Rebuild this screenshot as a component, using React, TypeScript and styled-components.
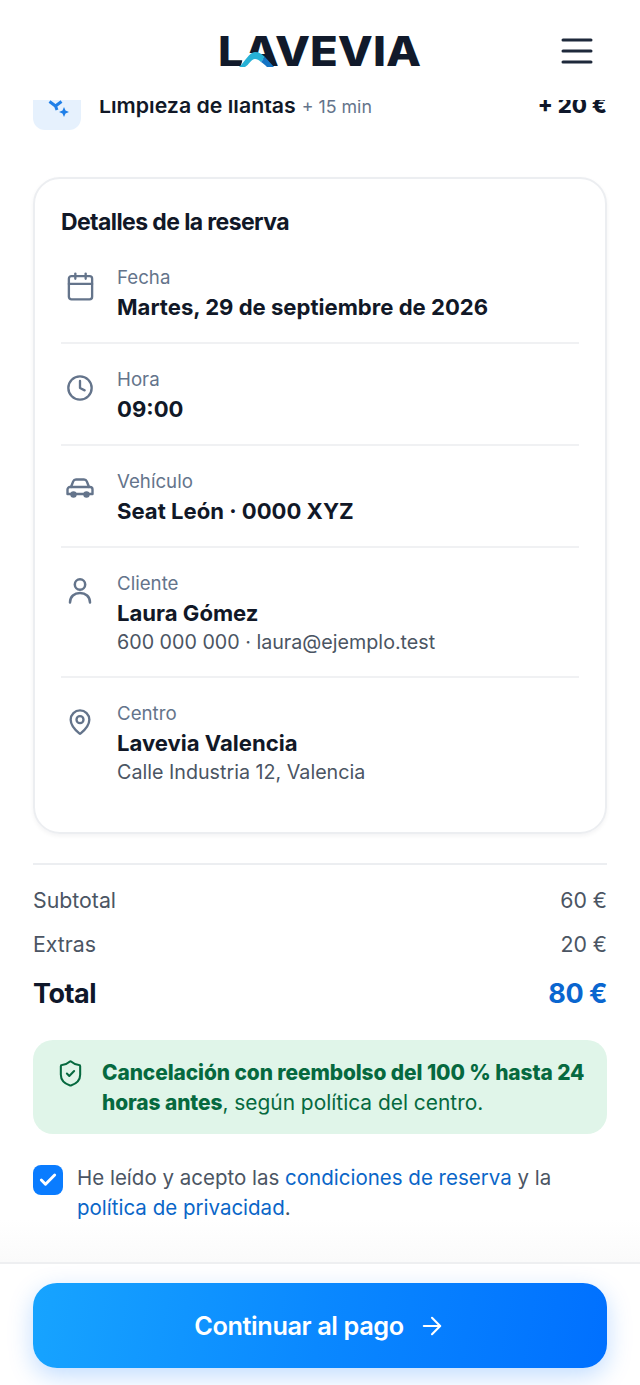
import React from "react";
import styled, { createGlobalStyle } from "styled-components";
import { Calendar, Clock, MapPin, ShieldCheck, Check, ArrowRight } from "lucide-react";

const GlobalStyle = createGlobalStyle`
  html, body { margin: 0; padding: 0; background: #fff; }
  * { box-sizing: border-box; }
  body { font-family: "Inter", "Liberation Sans", sans-serif; color: #0f172a; }
`;

const Page = styled.div`
  width: 640px;
  height: 1385px;
  display: flex;
  flex-direction: column;
  overflow: hidden;
  background: #fff;
`;

const Header = styled.header`
  height: 100px;
  flex-shrink: 0;
  display: flex;
  align-items: center;
  justify-content: center;
  position: relative;
  z-index: 2;
  background: #fff;
`;

const Logo = styled.svg`
  display: block;
`;

const MenuButton = styled.button`
  position: absolute;
  right: 47px;
  top: 38px;
  width: 32px;
  height: 26px;
  padding: 0;
  border: none;
  background: none;
`;

const Main = styled.main`
  flex: 1;
  min-height: 0;
  overflow: hidden;
  padding: 0 33px;
  background: linear-gradient(#fff 1120px, #fafafa);
`;

const ExtraRow = styled.div`
  display: flex;
  align-items: flex-start;
  gap: 18px;
  margin-top: -18px;
  height: 48px;
`;

const ExtraIcon = styled.div`
  width: 48px;
  height: 48px;
  border-radius: 12px;
  background: #e6f1fd;
  display: flex;
  align-items: center;
  justify-content: center;
  flex-shrink: 0;
`;

const ExtraName = styled.div`
  flex: 1;
  font-size: 21.3px;
  font-weight: 600;
  line-height: 30px;
  margin-top: 8px;
  color: #111827;
`;

const ExtraTime = styled.span`
  font-size: 17.8px;
  font-weight: 400;
  color: #64748b;
  margin-left: 6px;
`;

const ExtraPrice = styled.div`
  font-size: 22px;
  font-weight: 800;
  line-height: 30px;
  margin-top: 8px;
  color: #0f172a;
`;

const Card = styled.section`
  margin-top: 47px;
  height: 657px;
  border: 2px solid #eceef1;
  border-radius: 27px;
  padding: 27px 26px 0;
  box-shadow: 0 2px 4px rgba(15, 23, 42, 0.05);
`;

const CardTitle = styled.h2`
  margin: 0 0 4px;
  font-size: 23px;
  line-height: 32px;
  font-weight: 700;
  letter-spacing: -0.6px;
  color: #111827;
`;

const DetailRow = styled.div<{ $last?: boolean }>`
  display: flex;
  gap: 18px;
  padding: 23px 0 ${(p) => (p.$last ? "0" : "19px")};
  border-bottom: ${(p) => (p.$last ? "none" : "2px solid #f0f1f3")};
`;

const DetailIcon = styled.div`
  width: 38px;
  height: 42px;
  flex-shrink: 0;
  display: flex;
  align-items: center;
  justify-content: center;
  color: #64748b;
`;

const DetailBody = styled.div`
  display: flex;
  flex-direction: column;
  min-width: 0;
`;

const DetailLabel = styled.div`
  font-size: 18.7px;
  line-height: 26px;
  color: #64748b;
`;

const DetailValue = styled.div`
  font-size: 22.1px;
  line-height: 32px;
  font-weight: 700;
  color: #111827;
`;

const DetailNote = styled.div`
  font-size: 19.7px;
  line-height: 28px;
  margin: -1px 0 1px;
  color: #4b5563;
`;

const Summary = styled.div`
  margin-top: 29px;
  border-top: 2px solid #eceef1;
  padding-top: 20px;
`;

const SummaryRow = styled.div`
  display: flex;
  justify-content: space-between;
  font-size: 21.3px;
  line-height: 30px;
  height: 44px;
  color: #4b5563;
`;

const TotalRow = styled.div`
  display: flex;
  justify-content: space-between;
  align-items: center;
  height: 40px;
  font-size: 27px;
  font-weight: 700;
  letter-spacing: -0.5px;
  color: #0f172a;
`;

const TotalAmount = styled.span`
  color: #0a66cf;
`;

const Notice = styled.div`
  margin-top: 27px;
  height: 94px;
  display: flex;
  gap: 17px;
  padding: 18px 10px 0 23px;
  border-radius: 20px;
  background: #e0f5e9;
  color: #06693f;
  font-size: 20.9px;
  line-height: 30px;
`;

const NoticeIcon = styled.div`
  flex-shrink: 0;
  padding-top: 1px;
  height: 30px;
`;

const NoticeText = styled.div`
  strong {
    font-weight: 800;
    letter-spacing: -0.08px;
  }
`;

const Consent = styled.label`
  margin-top: 29px;
  display: flex;
  gap: 14px;
  font-size: 20.5px;
  line-height: 30px;
  color: #4b5563;
`;

const CheckBox = styled.span`
  width: 30px;
  height: 30px;
  margin-top: 2px;
  flex-shrink: 0;
  border-radius: 8px;
  background: #0a7cff;
  color: #fff;
  display: flex;
  align-items: center;
  justify-content: center;
`;

const ConsentLink = styled.a`
  color: #0a66c8;
  text-decoration: none;
`;

const Footer = styled.footer`
  height: 123px;
  flex-shrink: 0;
  padding: 19px 33px 0;
  border-top: 2px solid #eeeff1;
  background: #fff;
`;

const PayButton = styled.button`
  width: 574px;
  height: 85px;
  border: none;
  border-radius: 24px;
  display: flex;
  align-items: center;
  justify-content: center;
  gap: 14px;
  color: #fff;
  font-family: inherit;
  font-size: 25.3px;
  font-weight: 600;
  letter-spacing: -0.4px;
  background: linear-gradient(100deg, #17a4ff 0%, #0a88ff 50%, #0070ff 100%);
  box-shadow: 0 8px 24px rgba(10, 120, 255, 0.25);
`;

function CarIcon() {
  return (
    <svg width="28" height="24" viewBox="0 2 28 24" fill="none" stroke="currentColor" strokeWidth="2.4" strokeLinecap="round" strokeLinejoin="round">
      <path d="M5 11l2.200-5.600A3 3 0 0 1 10 3.500h8a3 3 0 0 1 2.800 1.900L23 11" />
      <path d="M4 11h20a2.500 2.500 0 0 1 2.500 2.500V18H1.500v-4.500A2.500 2.500 0 0 1 4 11z" />
      <circle cx="7.500" cy="18.500" r="2" fill="currentColor" />
      <circle cx="20.500" cy="18.500" r="2" fill="currentColor" />
    </svg>
  );
}

function PersonIcon() {
  return (
    <svg width="26" height="28" viewBox="0 1.500 26 28" fill="none" stroke="currentColor" strokeWidth="2.500" strokeLinecap="round">
      <circle cx="13" cy="8" r="5.200" />
      <path d="M3 26c0-6 4.400-9.500 10-9.500S23 20 23 26" />
    </svg>
  );
}

export default function App() {
  return (
    <Page>
      <GlobalStyle />
      <Header>
        <Logo width="204" height="60" viewBox="0 0 204 60" role="img" aria-label="Lavevia">
          <g transform="translate(0 11)">
            <text x="0" y="35" fontFamily="Inter, sans-serif" fontSize="41" fontWeight="800" fill="#111a2b" textLength="203" lengthAdjust="spacingAndGlyphs">LAVEVIA</text>
            <path d="M22 37 L27 22 L42 22 L50 37 Z" fill="#fff" />
            <path d="M21 36 C27 31 31 21 37 21 C41 21 44 23 47 26 L43 31 C41 29 39 28 37 28 C33 28 31 34 27 36 Z" fill="#27b1d6" />
            <path d="M47 26 C50 29 53 33 56 36 L49 36 C47 34 45 32 43 31 Z" fill="#1474c4" />
          </g>
        </Logo>
        <MenuButton aria-label="Menú">
          <svg width="32" height="26" viewBox="0 0 32 26" fill="none" stroke="#1e293b" strokeWidth="3" strokeLinecap="round">
            <path d="M2 2h28M2 13h28M2 24h28" />
          </svg>
        </MenuButton>
      </Header>

      <Main>
        <ExtraRow>
          <ExtraIcon>
            <svg width="24" height="24" viewBox="0 0 24 24" fill="#1f7fe8">
              <path d="M4.500 7.500L10.500 12L16.500 7.500M10.500 12L12 16" fill="none" stroke="#1f7fe8" strokeWidth="3" />
              <path d="M19 13l1.500 3.500 3.500 1.500-3.500 1.500-1.500 3.500-1.500-3.500-3.500-1.500 3.500-1.500z" />
            </svg>
          </ExtraIcon>
          <ExtraName>
            Limpieza de llantas<ExtraTime>+ 15 min</ExtraTime>
          </ExtraName>
          <ExtraPrice>+ 20 €</ExtraPrice>
        </ExtraRow>

        <Card>
          <CardTitle>Detalles de la reserva</CardTitle>
          <DetailRow>
            <DetailIcon><Calendar size={31} strokeWidth={1.8} /></DetailIcon>
            <DetailBody>
              <DetailLabel>Fecha</DetailLabel>
              <DetailValue>Martes, 29 de septiembre de 2026</DetailValue>
            </DetailBody>
          </DetailRow>
          <DetailRow>
            <DetailIcon><Clock size={28} strokeWidth={2} /></DetailIcon>
            <DetailBody>
              <DetailLabel>Hora</DetailLabel>
              <DetailValue>09:00</DetailValue>
            </DetailBody>
          </DetailRow>
          <DetailRow>
            <DetailIcon><CarIcon /></DetailIcon>
            <DetailBody>
              <DetailLabel>Vehículo</DetailLabel>
              <DetailValue>Seat León · 0000 XYZ</DetailValue>
            </DetailBody>
          </DetailRow>
          <DetailRow>
            <DetailIcon><PersonIcon /></DetailIcon>
            <DetailBody>
              <DetailLabel>Cliente</DetailLabel>
              <DetailValue>Laura Gómez</DetailValue>
              <DetailNote>600 000 000 · laura@ejemplo.test</DetailNote>
            </DetailBody>
          </DetailRow>
          <DetailRow $last>
            <DetailIcon><MapPin size={28} strokeWidth={2} /></DetailIcon>
            <DetailBody>
              <DetailLabel>Centro</DetailLabel>
              <DetailValue>Lavevia Valencia</DetailValue>
              <DetailNote>Calle Industria 12, Valencia</DetailNote>
            </DetailBody>
          </DetailRow>
        </Card>

        <Summary>
          <SummaryRow><span>Subtotal</span><span>60 €</span></SummaryRow>
          <SummaryRow><span>Extras</span><span>20 €</span></SummaryRow>
          <TotalRow><span>Total</span><TotalAmount>80 €</TotalAmount></TotalRow>
        </Summary>

        <Notice>
          <NoticeIcon><ShieldCheck size={29} strokeWidth={1.7} /></NoticeIcon>
          <NoticeText>
            <strong>Cancelación con reembolso del 100 % hasta 24 horas antes</strong>, según política del centro.
          </NoticeText>
        </Notice>

        <Consent>
          <CheckBox><Check size={20} strokeWidth={3.5} /></CheckBox>
          <span>
            He leído y acepto las <ConsentLink>condiciones de reserva</ConsentLink> y la <ConsentLink>política de privacidad</ConsentLink>.
          </span>
        </Consent>
      </Main>

      <Footer>
        <PayButton>
          Continuar al pago
          <ArrowRight size={28} strokeWidth={1.8} />
        </PayButton>
      </Footer>
    </Page>
  );
}
